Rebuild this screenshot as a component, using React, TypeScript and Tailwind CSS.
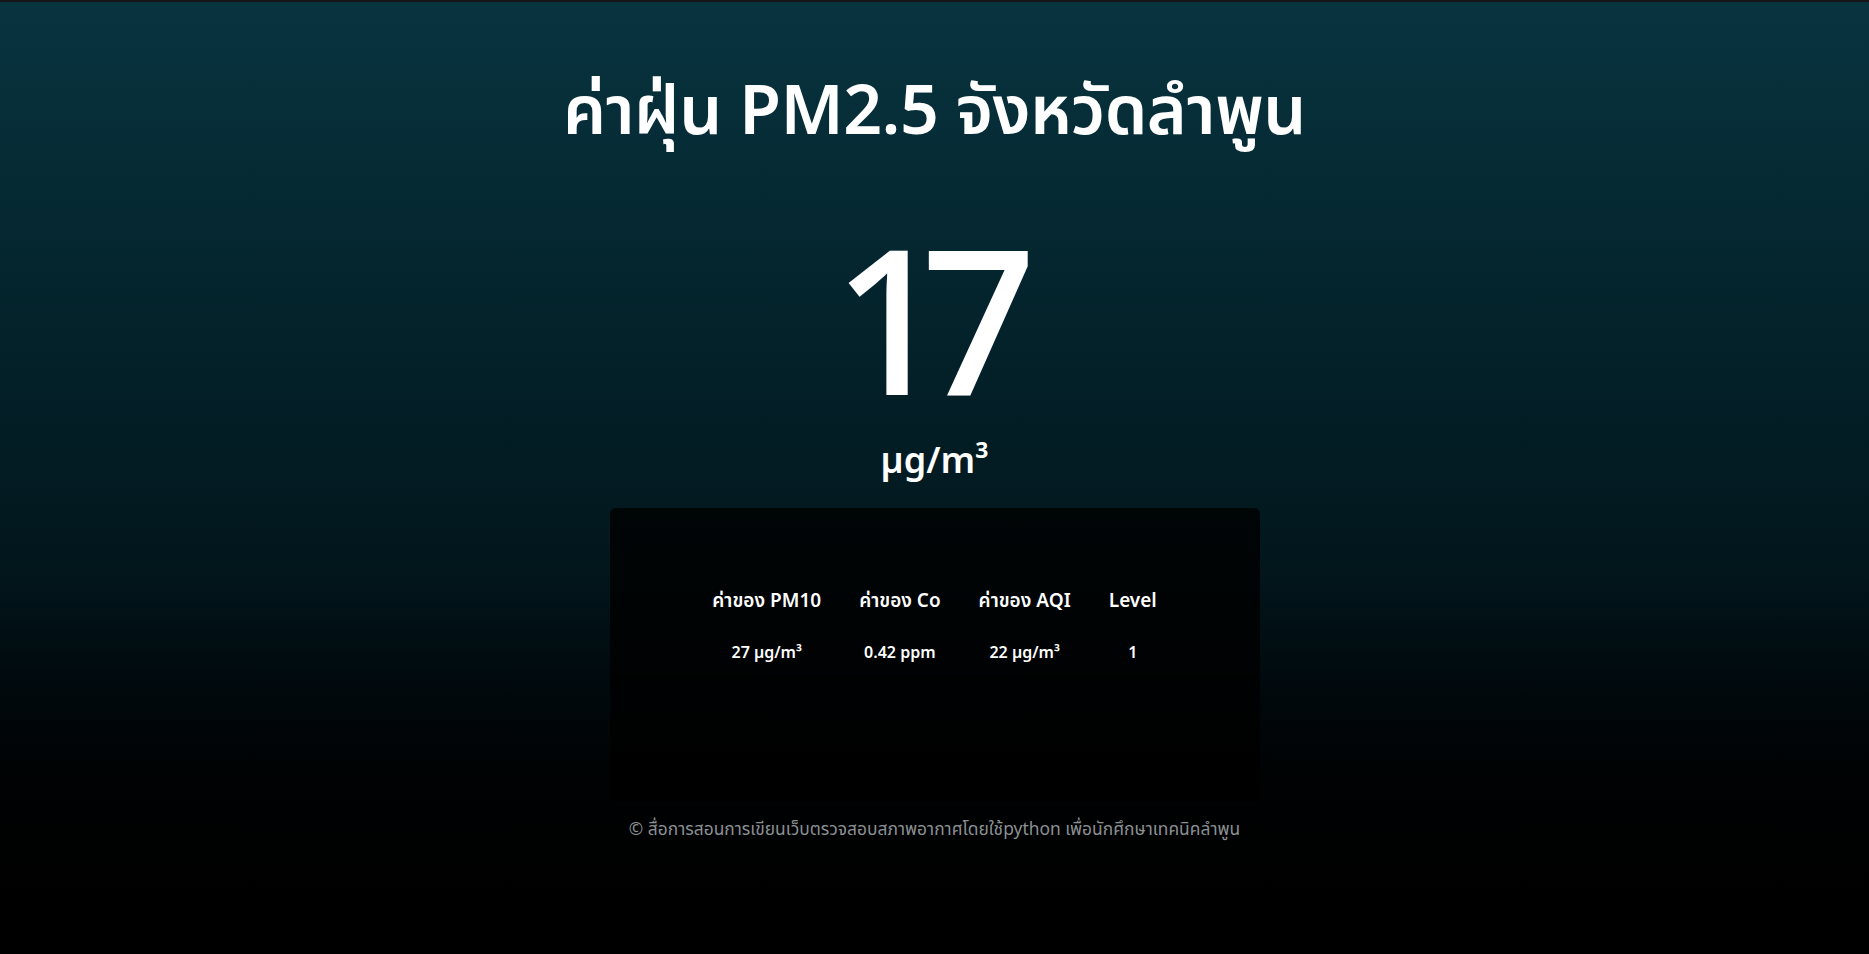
import React from "react";

const rows = [
  { label: "ค่าของ PM10", value: "27 µg/m³" },
  { label: "ค่าของ Co", value: "0.42 ppm" },
  { label: "ค่าของ AQI", value: "22 µg/m³" },
  { label: "Level", value: "1" },
];

const App = () => {
  return (
    <div
      className="flex min-h-screen flex-col items-center border-t-2 border-[#17141a] bg-gradient-to-b from-[#083440] via-[#02161c] via-60% to-black text-white"
      style={{ fontFamily: '"Noto Sans Thai", "Noto Sans", sans-serif' }}
    >
      <h1 className="mt-[72px] text-[68px] font-semibold leading-[80px] tracking-[-0.5px]">ค่าฝุ่น PM2.5 จังหวัดลำพูน</h1>
      <div className="mt-[80px] pr-[27px] text-[202px] font-medium leading-[200px] tracking-[-27px]">17</div>
      <div className="mt-[4px] text-[36px] font-semibold leading-[48px]">µg/m³</div>
      <div className="mt-[22px] flex h-[293px] w-[650px] items-start justify-center rounded-md bg-black/80 pt-[80px]">
        <table className="text-center">
          <thead>
            <tr>
              {rows.map((r) => (
                <th key={r.label} className="px-[19px] text-[19px] font-semibold leading-[28px]">
                  {r.label}
                </th>
              ))}
            </tr>
          </thead>
          <tbody>
            <tr>
              {rows.map((r) => (
                <td key={r.label} className="px-[19px] pt-[25px] text-[16px] font-semibold">
                  {r.value}
                </td>
              ))}
            </tr>
          </tbody>
        </table>
      </div>
      <p className="mt-[16px] text-[17.4px] text-[#8b9094]">
        © สื่อการสอนการเขียนเว็บตรวจสอบสภาพอากาศโดยใช้python เพื่อนักศึกษาเทคนิคลำพูน
      </p>
    </div>
  );
};

export default App;
